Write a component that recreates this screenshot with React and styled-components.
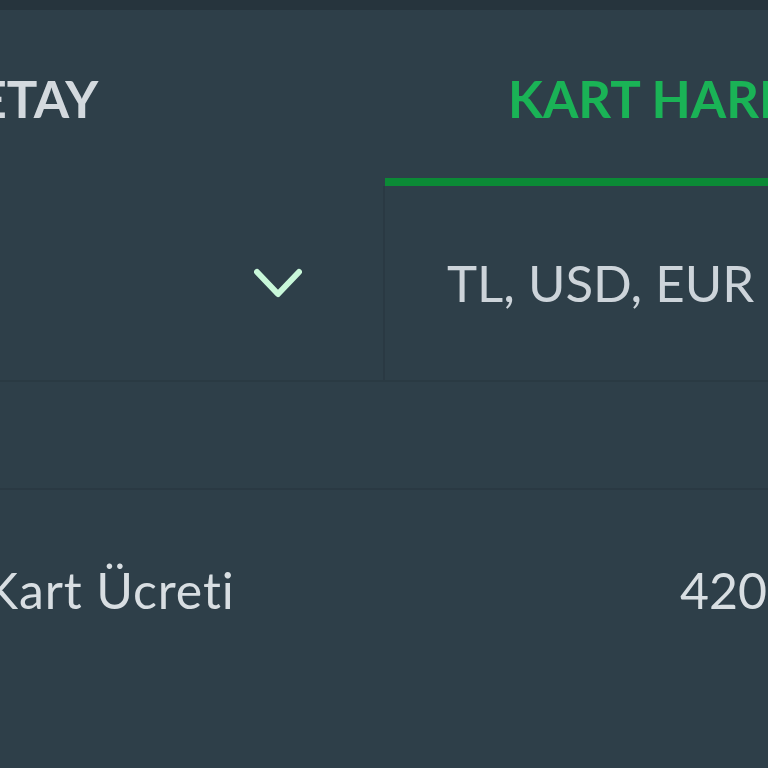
import React from "react";
import styled, { createGlobalStyle } from "styled-components";

const Global = createGlobalStyle`
  html, body { margin: 0; padding: 0; background: #2e3f49; overflow: hidden; }
  body { font-family: Lato, "Open Sans", sans-serif; }
`;

const Screen = styled.div`
  width: 768px;
  height: 768px;
  overflow: hidden;
  background: #2e3f49;
`;

const TopStrip = styled.div`
  height: 10px;
  background: #26343d;
`;

const Canvas = styled.div`
  width: 1452px;
  margin-left: -342px;
`;

const Tabs = styled.div`
  display: grid;
  grid-template-columns: 727px 725px;
  height: 176px;
`;

const Tab = styled.div`
  display: flex;
  align-items: center;
  justify-content: center;
  padding-top: 8px;
  font-weight: 700;
  font-size: 51px;
  letter-spacing: 0;
  color: ${(p) => (p.$active ? "#1ab356" : "#d3d9de")};
  border-bottom: 8px solid ${(p) => (p.$active ? "#0b8a36" : "transparent")};
  box-sizing: border-box;
  white-space: nowrap;
  padding-right: ${(p) => (p.$active ? "0" : "6px")};
  padding-left: ${(p) => (p.$active ? "0" : "0")};
`;

const InfoRow = styled.div`
  display: grid;
  grid-template-columns: 727px 725px;
  height: 194px;
  border-bottom: 2px solid #2a3a43;
`;

const SelectCell = styled.div`
  display: flex;
  align-items: center;
  justify-content: flex-end;
  padding-right: 81px;
  padding-top: 2px;
  border-right: 2px solid #2a3943;
`;

const ValueCell = styled.div`
  display: flex;
  align-items: center;
  padding-left: 62px;
  padding-bottom: 2px;
  font-size: 51px;
  color: #cdd4da;
  white-space: nowrap;
`;

const Spacer = styled.div`
  height: 106px;
  border-bottom: 2px solid #2a3943;
`;

const FeeRow = styled.div`
  display: grid;
  grid-template-columns: 1022px 1fr;
  align-items: center;
  height: 200px;
  font-size: 50px;
  color: #d8dee2;
  white-space: nowrap;
`;

const FeeLabel = styled.div`
  padding-left: 327px;
  letter-spacing: 0.9px;
`;

const FeeValue = styled.div``;

const Chevron = () => (
  <svg width="48" height="34" viewBox="0 0 48 34" fill="none">
    <path
      d="M3 5 L24 27 L45 5"
      stroke="#c8f7d9"
      strokeWidth="6"
      strokeLinecap="round"
      strokeLinejoin="round"
    />
  </svg>
);

export default function App() {
  return (
    <Screen>
      <Global />
      <TopStrip />
      <Canvas>
        <Tabs>
          <Tab>DETAY</Tab>
          <Tab $active>KART HAREKETLERİ</Tab>
        </Tabs>
        <InfoRow>
          <SelectCell>
            <Chevron />
          </SelectCell>
          <ValueCell>TL, USD, EUR</ValueCell>
        </InfoRow>
        <Spacer />
        <FeeRow>
          <FeeLabel>Kart Ücreti</FeeLabel>
          <FeeValue>420,00 TL</FeeValue>
        </FeeRow>
      </Canvas>
    </Screen>
  );
}
